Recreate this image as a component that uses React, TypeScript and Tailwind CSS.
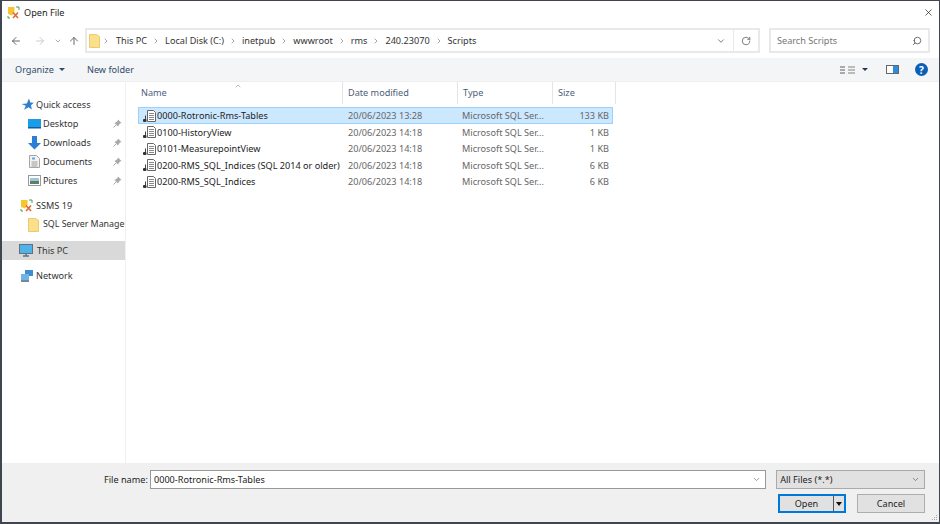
import { ArrowLeft, ArrowRight, ArrowUp, ChevronDown, ChevronRight, ChevronUp, RotateCw, Search, X } from 'lucide-react';

const font = { fontFamily: '"Noto Sans", "Open Sans", sans-serif' };

function SsmsIcon() {
  return (
    <svg width="13" height="13" viewBox="0 0 13 13" className="shrink-0">
      <path d="M1 1h6.500v5L5 9.500 1 8z" fill="#f7c531" />
      <path d="M6 6.500 11 12M11 6.500 6 12" stroke="#e2622a" strokeWidth="1.500" />
      <path d="M9 1h3v3M1 10v2h2" stroke="#46a04a" strokeWidth="1" fill="none" />
    </svg>
  );
}

function FolderIcon() {
  return (
    <svg width="11" height="14" viewBox="0 0 11 14" className="shrink-0">
      <path d="M.5.5h7l3 2v11H.5z" fill="#fbe08c" stroke="#eccb6c" />
    </svg>
  );
}

function ScriptIcon() {
  return (
    <svg width="15" height="14" viewBox="0 0 15 14" className="shrink-0">
      <path d="M5.500 1.500h6l2 2v9h-8z" fill="#fff" stroke="#666" />
      <path d="M7 4.500h5M7 6.500h5M7 8.500h5M7 10.500h5" stroke="#888" />
      <rect x="1" y="10" width="3.500" height="3" rx="1" fill="#333" />
      <path d="M3.500 10V6.500" stroke="#444" />
    </svg>
  );
}

function PinIcon() {
  return (
    <svg width="9" height="9" viewBox="0 0 9 9" className="shrink-0">
      <path d="M5 .5 8.500 4 7 4.500 5.500 6.500 5 7.500 1.500 4 2.500 3.500 4.500 2z" fill="#a9a9a9" />
      <path d="M3 6 .5 8.500" stroke="#a9a9a9" />
    </svg>
  );
}

function NavIcon({ kind }: { kind: string }) {
  if (kind === 'star') {
    return (
      <svg width="13" height="13" viewBox="0 0 13 13" className="shrink-0">
        <path d="M8 .5 9.300 4.500 12.800 4.800 10 7.300 10.800 11.500 7.500 9.300 3 11.800 4.800 7.800.5 6 5.800 5.500z" fill="#2f7fcf" />
      </svg>
    );
  }
  if (kind === 'desktop') {
    return (
      <svg width="13" height="12" viewBox="0 0 13 12" className="shrink-0">
        <rect x="0" y="1" width="13" height="9" fill="#1b9ce8" />
        <rect x="0" y="9" width="13" height="1.500" fill="#0c5f9e" />
      </svg>
    );
  }
  if (kind === 'down') {
    return (
      <svg width="13" height="14" viewBox="0 0 13 14" className="shrink-0">
        <path d="M4 0h5v7h4l-6.500 6.500L0 7h4z" fill="#2c7fd6" />
      </svg>
    );
  }
  if (kind === 'docs') {
    return (
      <svg width="11" height="13" viewBox="0 0 11 13" className="shrink-0">
        <path d="M.5.5h7l3 3v9H.5z" fill="#f2f2f2" stroke="#a5a5a5" />
        <path d="M3 2.500h3v2H3z" fill="#6aa7de" />
        <path d="M2.500 7h6M2.500 9h6M2.500 11h6" stroke="#9a9a9a" />
      </svg>
    );
  }
  if (kind === 'pics') {
    return (
      <svg width="13" height="11" viewBox="0 0 13 11" className="shrink-0">
        <rect x=".5" y=".5" width="12" height="10" fill="#fff" stroke="#9a9a9a" />
        <rect x="2" y="3" width="9" height="3" fill="#9cc6df" />
        <rect x="2" y="6" width="9" height="3" fill="#5d7f64" />
      </svg>
    );
  }
  if (kind === 'pc') {
    return (
      <svg width="14" height="13" viewBox="0 0 14 13" className="shrink-0">
        <rect x=".5" y=".5" width="13" height="9" fill="#4db3ea" stroke="#66707a" />
        <path d="M4 12h6M7 10v2" stroke="#66707a" strokeWidth="1.500" />
      </svg>
    );
  }
  return (
    <svg width="14" height="13" viewBox="0 0 14 13" className="shrink-0">
      <rect x="5" y="1" width="8" height="6" fill="#3d8ed0" />
      <rect x="1" y="5" width="8" height="6" fill="#6fb4e4" />
      <path d="M1 12h8" stroke="#49627a" strokeWidth="1.500" />
    </svg>
  );
}

const quick = [
  { label: 'Desktop', kind: 'desktop' },
  { label: 'Downloads', kind: 'down' },
  { label: 'Documents', kind: 'docs' },
  { label: 'Pictures', kind: 'pics' },
];

const crumbs = ['This PC', 'Local Disk (C:)', 'inetpub', 'wwwroot', 'rms', '240.23070', 'Scripts'];

const files = [
  { name: '0000-Rotronic-Rms-Tables', date: '20/06/2023 13:28', size: '133 KB' },
  { name: '0100-HistoryView', date: '20/06/2023 14:18', size: '1 KB' },
  { name: '0101-MeasurepointView', date: '20/06/2023 14:18', size: '1 KB' },
  { name: '0200-RMS_SQL_Indices (SQL 2014 or older)', date: '20/06/2023 14:18', size: '6 KB' },
  { name: '0200-RMS_SQL_Indices', date: '20/06/2023 14:18', size: '6 KB' },
];

export default function App() {
  return (
    <div style={font} className="flex h-[524px] w-[940px] flex-col overflow-hidden border border-b-2 border-[#3f4650] border-l-2 bg-white text-[9.15px] leading-none text-[#333]">
      {/* Title bar */}
      <div className="flex h-[23px] shrink-0 items-center pl-[5px] pr-[5px]">
        <SsmsIcon />
        <span className="ml-[4px] text-[#222]">Open File</span>
        <X className="ml-auto h-[11px] w-[11px] text-[#222]" strokeWidth={1.5} />
      </div>

      {/* Nav bar */}
      <div className="mt-[4px] flex h-[25px] shrink-0 items-center pr-[9px]">
        <div className="flex w-[83px] shrink-0 items-center pl-[8px]">
          <ArrowLeft className="h-[12px] w-[12px] text-[#666]" />
          <ArrowRight className="ml-[12px] h-[12px] w-[12px] text-[#ccc]" />
          <ChevronDown className="ml-[8px] h-[8px] w-[8px] text-[#888]" />
          <ArrowUp className="ml-[6px] h-[12px] w-[12px] text-[#666]" />
        </div>
        <div className="flex h-full w-[675px] shrink-0 items-center border-2 border-[#e9e9e9] pl-[2px]">
          <FolderIcon />
          <ChevronRight className="ml-[2px] h-[8px] w-[8px] text-[#777]" />
          <div className="ml-[1px] flex items-center">
            {crumbs.map((c, i) => (
              <div key={c} className="ml-[5px] flex items-center">
                <span className="text-[#333]">{c}</span>
                {i < crumbs.length - 1 && <ChevronRight className="ml-[5px] h-[8px] w-[8px] text-[#777]" />}
              </div>
            ))}
          </div>
          <ChevronDown className="ml-auto mr-[7px] h-[10px] w-[10px] text-[#666]" />
          <div className="flex h-full w-[25px] items-center justify-center border-l border-[#e9e9e9]">
            <RotateCw className="h-[10px] w-[10px] text-[#666]" />
          </div>
        </div>
        <div className="ml-[9px] flex h-full flex-1 items-center justify-between border-2 border-[#e9e9e9] pl-[6px] pr-[6px]">
          <span className="text-[#777]">Search Scripts</span>
          <Search className="h-[10px] w-[10px] -scale-x-100 text-[#555]" />
        </div>
      </div>

      {/* Toolbar */}
      <div className="mt-[5px] flex h-[24px] shrink-0 items-center border-b border-[#eeeeee] bg-[#f4f5f7] pl-[13px] pr-[11px]">
        <span className="text-[#2f4a6b]">Organize</span>
        <span className="ml-[5px] h-0 w-0 border-x-[3px] border-t-[3px] border-x-transparent border-t-[#2f4a6b]" />
        <span className="ml-[22px] text-[#2f4a6b]">New folder</span>
        <div className="ml-auto flex items-center">
          <div className="grid grid-cols-2 gap-x-[1px] gap-y-[1px]">
            {[0, 1, 2, 3, 4, 5].map((i) => (
              <span key={i} className={i % 2 === 0 ? 'h-[2px] w-[5px] bg-[#aaa]' : 'h-[2px] w-[7px] bg-[#bbb]'} />
            ))}
          </div>
          <span className="ml-[7px] h-0 w-0 border-x-[3px] border-t-[3px] border-x-transparent border-t-[#1f3a60]" />
          <div className="ml-[18px] flex h-[9px] w-[13px] border border-[#666]">
            <span className="flex-1 bg-white" />
            <span className="w-[5px] bg-[#2c8de0]" />
          </div>
          <span className="ml-[16px] flex h-[13px] w-[13px] items-center justify-center rounded-full bg-[#0a5fb8] text-[10px] font-bold text-white">?</span>
        </div>
      </div>

      {/* Main */}
      <div className="flex min-h-0 flex-1">
        <div className="w-[124px] shrink-0 border-r border-[#f0f0f0] pt-[13px]">
          <div className="flex h-[19px] items-center pl-[19px]">
            <NavIcon kind="star" />
            <span className="ml-[2px]">Quick access</span>
          </div>
          {quick.map((q) => (
            <div key={q.label} className="flex h-[19px] items-center pl-[24px] pr-[3px]">
              <div className="flex w-[16px] shrink-0 justify-center"><NavIcon kind={q.kind} /></div>
              <span className="ml-[1px]">{q.label}</span>
              <span className="ml-auto"><PinIcon /></span>
            </div>
          ))}
          <div className="mt-[6px] flex h-[19px] items-center pl-[18px]">
            <SsmsIcon />
            <span className="ml-[3px]">SSMS 19</span>
          </div>
          <div className="flex h-[19px] items-center whitespace-nowrap pl-[26px]">
            <FolderIcon />
            <span className="ml-[4px] text-[8.85px]">SQL Server Manage</span>
          </div>
          <div className="mt-[7px] flex h-[19px] items-center bg-[#d9d9d9] pl-[17px]">
            <NavIcon kind="pc" />
            <span className="ml-[4px]">This PC</span>
          </div>
          <div className="mt-[6px] flex h-[19px] items-center pl-[18px]">
            <NavIcon kind="network" />
            <span className="ml-[2px]">Network</span>
          </div>
        </div>

        <div className="min-w-0 flex-1">
          {/* Column headers */}
          <div className="relative flex h-[22px] items-center text-[#4c607a]">
            <ChevronUp className="absolute left-[108px] top-0 h-[8px] w-[8px] text-[#999]" />
            <div className="flex h-full w-[217px] items-center border-r border-[#e5e5e5] pl-[15px]">Name</div>
            <div className="flex h-full w-[115px] items-center border-r border-[#e5e5e5] pl-[5px]">Date modified</div>
            <div className="flex h-full w-[95px] items-center border-r border-[#e5e5e5] pl-[5px]">Type</div>
            <div className="flex h-full w-[63px] items-center border-r border-[#e5e5e5] pl-[5px]">Size</div>
          </div>
          <div className="mt-[3px] w-[487px] pl-[12px]">
            {files.map((f, i) => (
              <div
                key={f.date + f.name}
                className={
                  i === 0
                    ? 'flex h-[17px] items-center border border-[#99d1ff] bg-[#cce8ff]'
                    : 'flex h-[16.5px] items-center border border-transparent'
                }
              >
                <div className="flex w-[209px] shrink-0 items-center whitespace-nowrap pl-[3px]">
                  <ScriptIcon />
                  <span className="text-[#222]">{f.name}</span>
                </div>
                <span className="w-[114px] shrink-0 text-[#666]">{f.date}</span>
                <span className="w-[95px] shrink-0 whitespace-nowrap text-[#666]">Microsoft SQL Ser...</span>
                <span className="w-[52px] shrink-0 text-right text-[#666]">{f.size}</span>
              </div>
            ))}
          </div>
        </div>
      </div>

      {/* Footer */}
      <div className="relative h-[59px] shrink-0 bg-[#f0f0f0] pr-[14px] pt-[7px]">
        <div className="flex h-[19px] items-center">
          <span className="ml-[102px] w-[46px] whitespace-nowrap text-[#222]">File name:</span>
          <div className="flex h-full w-[617px] items-center border border-[#999] bg-white pl-[3px] text-[#222]">
            0000-Rotronic-Rms-Tables
            <ChevronDown className="ml-auto mr-[4px] h-[9px] w-[9px] text-[#777]" />
          </div>
          <div className="ml-[10px] flex h-full w-[149px] items-center justify-between border border-[#aaa] bg-[#e1e1e1] pl-[3px] pr-[4px] text-[#222]">
            All Files (*.*)
            <ChevronDown className="h-[9px] w-[9px] text-[#666]" />
          </div>
        </div>
        <div className="mt-[5px] flex justify-end text-[#222]">
          <div className="flex h-[19px] w-[68px] border-2 border-[#0078d7] bg-[#e1e1e1]">
            <span className="flex flex-1 items-center justify-center">Open</span>
            <span className="flex w-[11px] items-center justify-center border-l border-[#555]">
              <span className="h-0 w-0 border-x-[3px] border-t-[4px] border-x-transparent border-t-[#111]" />
            </span>
          </div>
          <div className="ml-[11px] flex h-[19px] w-[68px] items-center justify-center border border-[#adadad] bg-[#e1e1e1]">Cancel</div>
        </div>
        <div className="absolute bottom-[2px] right-[2px] grid grid-cols-3 gap-[1px]">
          {[0, 1, 2, 3, 4, 5, 6, 7, 8].map((i) => (
            <span key={i} className={[2, 4, 5, 6, 7, 8].includes(i) ? 'h-[1px] w-[1px] bg-[#aaa]' : 'h-[1px] w-[1px]'} />
          ))}
        </div>
      </div>
    </div>
  );
}
